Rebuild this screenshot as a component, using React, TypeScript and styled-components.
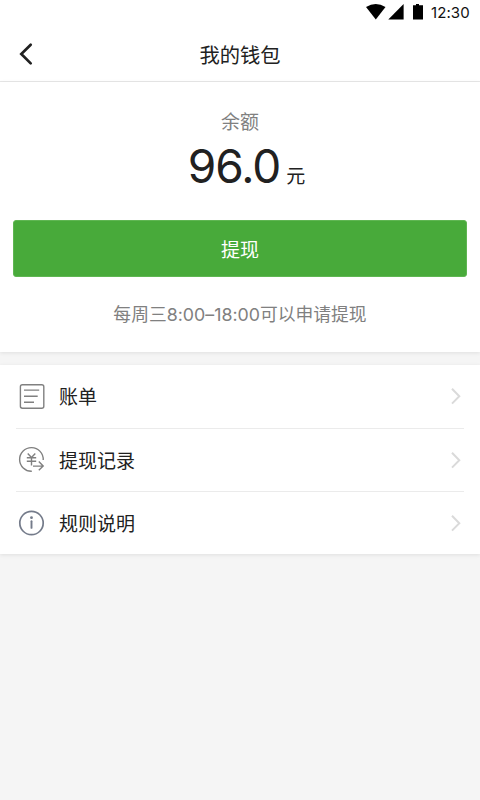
import React from "react";
import styled, { createGlobalStyle } from "styled-components";

const GlobalStyle = createGlobalStyle`
  *, *::before, *::after { box-sizing: border-box; }
  body {
    margin: 0;
    background: #f5f5f5;
    color: #212121;
    font-family: Inter, "Noto Sans CJK SC", sans-serif;
    font-feature-settings: "calt" 0;
  }
`;

const Page = styled.div`
  height: 800px;
  width: 480px;
  overflow: hidden;
`;

const StatusBar = styled.div`
  display: flex;
  align-items: center;
  height: 26px;
  padding-left: 366px;
  background: #fff;
  svg { display: block; flex: none; }
`;

const Clock = styled.span`
  margin-left: 7px;
  color: #111;
  font-size: 15px;
  line-height: 26px;
  letter-spacing: 0.1px;
`;

const NavBar = styled.header`
  display: grid;
  grid-template-columns: 60px 1fr 60px;
  align-items: center;
  height: 56px;
  background: #fff;
  border-bottom: 1px solid #e8e8e8;
`;

const BackButton = styled.button`
  display: flex;
  align-items: center;
  height: 55px;
  padding: 0 0 0 18px;
  border: 0;
  background: none;
`;

const Title = styled.h1`
  margin: 0;
  padding-top: 4px;
  font-size: 20.3px;
  font-weight: 400;
  line-height: 51px;
  text-align: center;
`;

const Panel = styled.section`
  background: #fff;
  box-shadow: 0 1px 4px rgba(0, 0, 0, 0.09);
`;

const BalancePanel = styled(Panel)`
  display: flex;
  flex-direction: column;
  align-items: center;
  height: 270px;
  padding: 27px 13px 0;
`;

const BalanceLabel = styled.div`
  color: #808080;
  font-size: 19px;
  line-height: 28px;
`;

const Balance = styled.div`
  display: flex;
  align-items: baseline;
  height: 60px;
  margin-left: 13px;
`;

const Amount = styled.span`
  font-size: 46px;
  line-height: 58px;
  letter-spacing: -1px;
`;

const Unit = styled.span`
  margin-left: 6px;
  font-size: 19px;
`;

const WithdrawButton = styled.button`
  width: 100%;
  height: 57px;
  margin-top: 23px;
  padding: 0;
  border: 1px solid #5fb652;
  border-radius: 3px;
  background: #48aa3a;
  color: #fff;
  font: inherit;
  font-size: 19px;
`;

const Hint = styled.p`
  margin: 24px 0 0;
  color: #808080;
  font-size: 17.8px;
  line-height: 28px;
  white-space: nowrap;
`;

const Menu = styled(Panel)`
  margin-top: 13px;
  padding: 0 16px;
`;

const MenuRow = styled.div<{ $last?: boolean }>`
  display: flex;
  align-items: center;
  height: ${(p) => (p.$last ? "62.4px" : "63.5px")};
  border-bottom: ${(p) => (p.$last ? "0" : "1px solid #ebebeb")};
  svg { display: block; flex: none; }
`;

const RowIcon = styled.span`
  width: 43px;
  padding-left: 2px;
`;

const RowLabel = styled.span`
  flex: 1;
  padding-top: 3.5px;
  font-size: 19px;
  line-height: 28px;
`;

const Chevron = () => (
  <svg width="14" height="18" viewBox="0 0 14 18" fill="none" stroke="#dadada" strokeWidth="2">
    <path d="M2 1.8 9.3 9.2 2 16.6" />
  </svg>
);

const BillIcon = () => (
  <svg width="27" height="27" viewBox="0 0 27 27" fill="none" stroke="#808080" strokeWidth="1.4">
    <rect x="2.4" y="1.8" width="23.4" height="23.4" rx="2" />
    <path d="M6 7.1h15.2M6 13.2h13.7M6 19.2h10" />
  </svg>
);

const RecordIcon = () => (
  <svg width="27" height="27" viewBox="0 0 27 27" fill="none" stroke="#808080" strokeWidth="1.4">
    <path d="M13.8 25.2A11.8 11.8 0 1 1 25.2 14" />
    <path d="m9.7 7.5 3.8 4 3.8-4M8.8 11.8h9.4M8.8 15.2h9.4M13.5 11.5v8" />
    <path d="M15 20.1h10.1M20.8 15.6l4.4 4.5-4.4 4.2" />
  </svg>
);

const InfoIcon = () => (
  <svg width="27" height="27" viewBox="0 0 27 27" fill="none" stroke="#747b8a">
    <circle cx="13.5" cy="13" r="11.7" strokeWidth="1.7" />
    <path d="M13.5 11.2v6.7" strokeWidth="1.9" strokeLinecap="round" />
    <circle cx="13.5" cy="7.7" r="1.4" fill="#747b8a" stroke="none" />
  </svg>
);

const rows = [
  { label: "账单", Icon: BillIcon },
  { label: "提现记录", Icon: RecordIcon },
  { label: "规则说明", Icon: InfoIcon },
];

export default function App() {
  return (
    <Page>
      <GlobalStyle />
      <StatusBar>
        <svg width="58" height="26" viewBox="0 0 58 26" fill="#000">
          <path d="M0 7Q9.8.8 19.5 7L9.8 19.4Z" />
          <path d="M37.6 4v15.4H22.3Z" />
          <path d="M50 4h3v1.3h4v14.1H47V5.3h3Z" />
        </svg>
        <Clock>12:30</Clock>
      </StatusBar>
      <NavBar>
        <BackButton aria-label="返回">
          <svg width="16" height="24" viewBox="0 0 16 24" fill="none" stroke="#212121" strokeWidth="2.7" strokeLinecap="round">
            <path d="M12.7 2.7 3.3 12l9.4 9.4" />
          </svg>
        </BackButton>
        <Title>我的钱包</Title>
      </NavBar>
      <BalancePanel>
        <BalanceLabel>余额</BalanceLabel>
        <Balance>
          <Amount>96.0</Amount>
          <Unit>元</Unit>
        </Balance>
        <WithdrawButton>提现</WithdrawButton>
        <Hint>每周三8:00–18:00可以申请提现</Hint>
      </BalancePanel>
      <Menu>
        {rows.map(({ label, Icon }, i) => (
          <MenuRow key={label} $last={i === rows.length - 1}>
            <RowIcon><Icon /></RowIcon>
            <RowLabel>{label}</RowLabel>
            <Chevron />
          </MenuRow>
        ))}
      </Menu>
    </Page>
  );
}
